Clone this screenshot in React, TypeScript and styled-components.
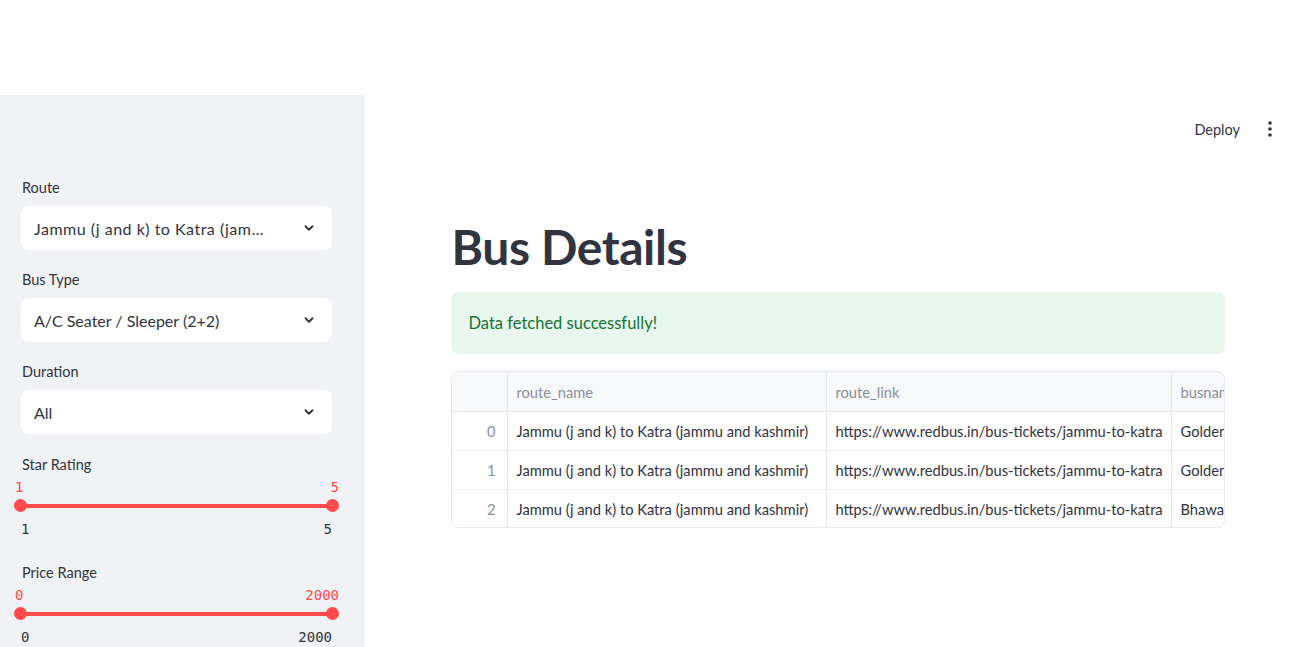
import React from 'react';
import styled, { createGlobalStyle } from 'styled-components';

const GlobalStyle = createGlobalStyle`
  html, body {
    margin: 0;
    padding: 0;
    background: #ffffff;
  }
  body {
    font-family: Lato, "Noto Sans", sans-serif;
    color: #31333f;
  }
`;

type Row = {
  idx: number
  routeName: string
  routeLink: string
  busName: string
}

const rows: Row[] = [
  {idx: 0, routeName: 'Jammu (j and k) to Katra (jammu and kashmir)', routeLink: 'https://www.redbus.in/bus-tickets/jammu-to-katra', busName: 'Golden Travels'},
  {idx: 1, routeName: 'Jammu (j and k) to Katra (jammu and kashmir)', routeLink: 'https://www.redbus.in/bus-tickets/jammu-to-katra', busName: 'Golden Travels'},
  {idx: 2, routeName: 'Jammu (j and k) to Katra (jammu and kashmir)', routeLink: 'https://www.redbus.in/bus-tickets/jammu-to-katra', busName: 'Bhawani Travels'},
];

const Chevron = () => (
  <svg width="14" height="14" viewBox="0 0 24 24" fill="none" stroke="#31333f" strokeWidth="3.2" strokeLinecap="round" strokeLinejoin="round">
    <path d="M6 9l6 6 6-6"/>
  </svg>
);

const Kebab = () => (
  <svg width="4" height="16" viewBox="0 0 4 16" fill="#31333f">
    <circle cx="2" cy="2" r="1.8"/>
    <circle cx="2" cy="8" r="1.8"/>
    <circle cx="2" cy="14" r="1.8"/>
  </svg>
);

type SelectProps = { label: string, value: string, spacing?: number }

const SelectField = ({label, value, spacing}: SelectProps) => (
  <Field>
    <Label>{label}</Label>
    <SelectBox>
      <SelectText $spacing={spacing}>{value}</SelectText>
      <Chevron/>
    </SelectBox>
  </Field>
);

type SliderProps = { label: string, min: string, max: string }

const RangeField = ({label, min, max}: SliderProps) => (
  <Field $range>
    <Label>{label}</Label>
    <ValueRow>
      <span>{min}</span>
      <span>{max}</span>
    </ValueRow>
    <TrackRow>
      <Thumb/>
      <Bar/>
      <Thumb/>
    </TrackRow>
    <TickRow>
      <span>{min}</span>
      <span>{max}</span>
    </TickRow>
  </Field>
);

export default function App() {
  return (
    <>
      <GlobalStyle/>
      <TopSpace/>
      <Shell>
        <Sidebar>
          <SelectField label="Route" value="Jammu (j and k) to Katra (jam…" spacing={0.5}/>
          <SelectField label="Bus Type" value="A/C Seater / Sleeper (2+2)"/>
          <SelectField label="Duration" value="All"/>
          <RangeField label="Star Rating" min="1" max="5"/>
          <RangeField label="Price Range" min="0" max="2000"/>
        </Sidebar>
        <Main>
          <Header>
            <DeployButton>Deploy</DeployButton>
            <MenuButton><Kebab/></MenuButton>
          </Header>
          <Content>
            <Title>Bus Details</Title>
            <Alert>Data fetched successfully!</Alert>
            <TableWrap>
              <Table>
                <HeadRow>
                  <IndexCell $head/>
                  <Cell $w={319} $head>route_name</Cell>
                  <Cell $w={345} $head>route_link</Cell>
                  <Cell $w={200} $head>busname</Cell>
                </HeadRow>
                {rows.map(r => (
                  <BodyRow key={r.idx}>
                    <IndexCell>{r.idx}</IndexCell>
                    <Cell $w={319}>{r.routeName}</Cell>
                    <Cell $w={345}>{r.routeLink}</Cell>
                    <Cell $w={200}>{r.busName}</Cell>
                  </BodyRow>
                ))}
              </Table>
            </TableWrap>
          </Content>
        </Main>
      </Shell>
    </>
  );
}

const TopSpace = styled.div`
  height: 95px;
  background: #ffffff;
`

const Shell = styled.div`
  display: flex;
  min-height: 552px;
`

const Sidebar = styled.aside`
  width: 365px;
  flex-shrink: 0;
  box-sizing: border-box;
  background: #f0f2f6;
  padding: 81px 33px 0 21px;
  display: flex;
  flex-direction: column;
  gap: 18px;
`

const Field = styled.div<{ $range?: boolean }>`
  display: flex;
  flex-direction: column;
  margin-top: ${p => p.$range ? '1px' : '0'};
`

const Label = styled.label`
  font-size: 14.5px;
  line-height: 24px;
  height: 24px;
  margin-bottom: 6px;
  padding-left: 1px;
  color: #31333f;
`

const SelectBox = styled.div`
  height: 44px;
  box-sizing: border-box;
  background: #ffffff;
  border-radius: 8px;
  display: flex;
  align-items: center;
  justify-content: space-between;
  padding: 0 16px 0 13px;
  gap: 20px;
`

const SelectText = styled.span<{ $spacing?: number }>`
  font-size: 16px;
  letter-spacing: ${p => p.$spacing ?? 0}px;
  color: #31333f;
  white-space: nowrap;
`

const ValueRow = styled.div`
  display: flex;
  justify-content: space-between;
  margin: -6px -7px 0 -6px;
  height: 20px;
  line-height: 20px;
  font-family: "DejaVu Sans Mono", "Liberation Mono", monospace;
  font-size: 14px;
  color: #ff4b4b;
`

const TrackRow = styled.div`
  display: flex;
  align-items: center;
  height: 17px;
  margin: 0 -7px 0 -7px;
`

const Thumb = styled.div`
  width: 13px;
  height: 13px;
  border-radius: 50%;
  background: #ff4b4b;
  flex-shrink: 0;
`

const Bar = styled.div`
  flex: 1;
  height: 4px;
  margin: 0 -1px;
  background: #ff4b4b;
`

const TickRow = styled.div`
  display: flex;
  justify-content: space-between;
  margin-top: 4px;
  height: 24px;
  line-height: 22px;
  font-family: "DejaVu Sans Mono", "Liberation Mono", monospace;
  font-size: 14px;
  color: #31333f;
`

const Main = styled.main`
  flex: 1;
  display: flex;
  flex-direction: column;
`

const Header = styled.header`
  height: 68px;
  display: flex;
  align-items: center;
  justify-content: flex-end;
  padding-right: 38px;
  gap: 28px;
`

const DeployButton = styled.span`
  font-size: 14.5px;
  color: #31333f;
`

const MenuButton = styled.span`
  display: flex;
  align-items: center;
`

const Content = styled.div`
  width: 774px;
  margin: 0 auto;
  padding-top: 52px;
  display: flex;
  flex-direction: column;
`

const Title = styled.h1`
  margin: 0;
  font-size: 48px;
  font-weight: 700;
  line-height: 64px;
  color: #31333f;
  letter-spacing: -0.4px;
  padding-left: 1px;
`

const Alert = styled.div`
  margin-top: 13px;
  height: 62px;
  box-sizing: border-box;
  background: #e8f8ee;
  border-radius: 8px;
  padding: 0 18px;
  display: flex;
  align-items: center;
  font-size: 16.5px;
  color: #177233;
`

const TableWrap = styled.div`
  margin-top: 17px;
  border: 1px solid #e6e9ef;
  border-radius: 8px;
  overflow: hidden;
`

const Table = styled.div`
  display: flex;
  flex-direction: column;
  width: max-content;
`

const HeadRow = styled.div`
  display: flex;
  height: 39px;
  background: #f8f9fb;
  border-bottom: 1px solid #e6e9ef;
`

const BodyRow = styled.div`
  display: flex;
  height: 38px;
  border-bottom: 1px solid #ebedf1;
  &:last-child {
    height: 37px;
    border-bottom: none;
  }
`

const Cell = styled.div<{ $w: number, $head?: boolean }>`
  width: ${p => p.$w}px;
  box-sizing: border-box;
  padding: 0 9px;
  display: flex;
  align-items: center;
  border-right: 1px solid #e6e9ef;
  font-size: 14.7px;
  white-space: nowrap;
  overflow: hidden;
  color: ${p => p.$head ? '#8b8e98' : '#31333f'};
`

const IndexCell = styled.div<{ $head?: boolean }>`
  width: 56px;
  box-sizing: border-box;
  padding: 0 11px;
  display: flex;
  align-items: center;
  justify-content: flex-end;
  border-right: 1px solid #e6e9ef;
  font-size: 14.7px;
  color: #8b8e98;
`
